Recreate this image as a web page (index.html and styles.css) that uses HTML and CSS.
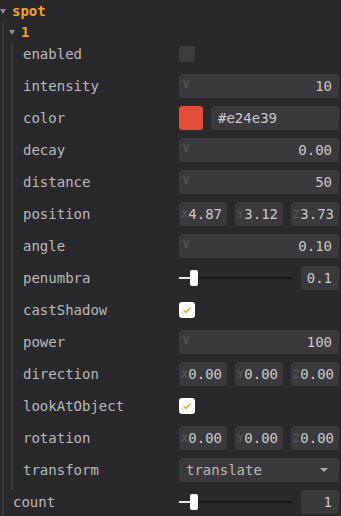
FILE: index.html
```html
<!DOCTYPE html>
<html lang="en">
<head>
    <meta charset="UTF-8">
    <meta name="viewport" content="width=device-width, initial-scale=1.0">
    <title>spot</title>
    <link rel="stylesheet" href="styles.css">
</head>
<body>
    <div class="panel">
        <div class="folder-title top">
            <span class="arrow"></span>
            <span class="folder-name">spot</span>
        </div>
        <div class="folder-body">
            <div class="folder-title sub">
                <span class="arrow"></span>
                <span class="folder-name">1</span>
            </div>
            <div class="sub-body">
                <div class="row">
                    <span class="label">enabled</span>
                    <div class="control"><span class="check"></span></div>
                </div>
                <div class="row">
                    <span class="label">intensity</span>
                    <div class="control"><div class="num"><span class="tag">V</span><span class="val">10</span></div></div>
                </div>
                <div class="row">
                    <span class="label">color</span>
                    <div class="control color-ctl">
                        <span class="swatch"></span>
                        <div class="text-input">#e24e39</div>
                    </div>
                </div>
                <div class="row">
                    <span class="label">decay</span>
                    <div class="control"><div class="num"><span class="tag">V</span><span class="val">0.00</span></div></div>
                </div>
                <div class="row">
                    <span class="label">distance</span>
                    <div class="control"><div class="num"><span class="tag">V</span><span class="val">50</span></div></div>
                </div>
                <div class="row">
                    <span class="label">position</span>
                    <div class="control vec">
                        <div class="num"><span class="tag">X</span><span class="val">4.87</span></div>
                        <div class="num"><span class="tag">Y</span><span class="val">3.12</span></div>
                        <div class="num"><span class="tag">Z</span><span class="val">3.73</span></div>
                    </div>
                </div>
                <div class="row">
                    <span class="label">angle</span>
                    <div class="control"><div class="num"><span class="tag">V</span><span class="val">0.10</span></div></div>
                </div>
                <div class="row">
                    <span class="label">penumbra</span>
                    <div class="control slider-ctl">
                        <div class="slider"><span class="fill" style="width: 10%"></span><span class="thumb"></span><span class="rest"></span></div>
                        <div class="num small"><span class="val">0.1</span></div>
                    </div>
                </div>
                <div class="row">
                    <span class="label">castShadow</span>
                    <div class="control"><span class="check on"><svg width="10" height="8" viewBox="0 0 10 8"><path d="M1.5 4.2 L4 6.5 L8.5 1.5" fill="none" stroke="#f0a030" stroke-width="1.4"/></svg></span></div>
                </div>
                <div class="row">
                    <span class="label">power</span>
                    <div class="control"><div class="num"><span class="tag">V</span><span class="val">100</span></div></div>
                </div>
                <div class="row">
                    <span class="label">direction</span>
                    <div class="control vec">
                        <div class="num"><span class="tag">X</span><span class="val">0.00</span></div>
                        <div class="num"><span class="tag">Y</span><span class="val">0.00</span></div>
                        <div class="num"><span class="tag">Z</span><span class="val">0.00</span></div>
                    </div>
                </div>
                <div class="row">
                    <span class="label">lookAtObject</span>
                    <div class="control"><span class="check on"><svg width="10" height="8" viewBox="0 0 10 8"><path d="M1.5 4.2 L4 6.5 L8.5 1.5" fill="none" stroke="#f0a030" stroke-width="1.4"/></svg></span></div>
                </div>
                <div class="row">
                    <span class="label">rotation</span>
                    <div class="control vec">
                        <div class="num"><span class="tag">X</span><span class="val">0.00</span></div>
                        <div class="num"><span class="tag">Y</span><span class="val">0.00</span></div>
                        <div class="num"><span class="tag">Z</span><span class="val">0.00</span></div>
                    </div>
                </div>
                <div class="row">
                    <span class="label">transform</span>
                    <div class="control">
                        <div class="select"><span>translate</span><span class="caret"></span></div>
                    </div>
                </div>
            </div>
            <div class="row count">
                <span class="label">count</span>
                <div class="control slider-ctl">
                    <div class="slider"><span class="fill" style="width: 10%"></span><span class="thumb"></span><span class="rest"></span></div>
                    <div class="num small"><span class="val">1</span></div>
                </div>
            </div>
        </div>
    </div>
</body>
</html>
```
FILE: styles.css
```css
body {
    margin: 0;
    background: #29292c;
    font-family: "DejaVu Sans Mono", monospace;
    font-size: 14px;
    color: #b8b8bc;
}
.panel {
    padding-right: 2px;
}
.folder-title {
    display: flex;
    align-items: center;
    color: #f0a030;
    font-weight: bold;
}
.folder-title.top {
    height: 22px;
}
.folder-title.sub {
    height: 20px;
    padding-left: 5px;
}
.arrow {
    width: 0;
    height: 0;
    border-left: 3.5px solid transparent;
    border-right: 3.5px solid transparent;
    border-top: 5px solid #8c8c92;
    margin-right: 6px;
}
.folder-body {
    margin-left: 2px;
    border-left: 2px solid #3b3b3e;
}
.sub-body {
    margin-left: 7px;
    border-left: 2px solid #3b3b3e;
    padding-left: 10px;
    padding-bottom: 8px;
    display: flex;
    flex-direction: column;
    gap: 8px;
}
.row {
    display: flex;
    align-items: center;
    height: 24px;
}
.row.count {
    padding-left: 9px;
}
.label {
    flex: 1;
}
.control {
    width: 160px;
    display: flex;
    align-items: center;
    height: 24px;
}
.check {
    width: 16px;
    height: 16px;
    border-radius: 3px;
    background: #3c3c3f;
    display: flex;
    align-items: center;
    justify-content: center;
}
.check.on {
    background: #ffffff;
}
.num {
    flex: 1;
    height: 24px;
    background: #3a3a3d;
    border-radius: 4px;
    display: flex;
    align-items: center;
    padding: 0 7px 0 4px;
    color: #c8c8cc;
}
.tag {
    font-size: 10px;
    color: #5c5c61;
    align-self: flex-start;
    margin-top: 5px;
}
.val {
    margin-left: auto;
}
.vec {
    gap: 8px;
}
.vec .num {
    padding: 0 5px 0 2px;
}
.vec .tag {
    font-size: 11px;
    align-self: center;
    margin-top: 0;
}
.color-ctl {
    gap: 8px;
}
.swatch {
    width: 24px;
    height: 24px;
    border-radius: 3px;
    background: #e24e39;
}
.text-input {
    flex: 1;
    height: 24px;
    background: #3a3a3d;
    border-radius: 4px;
    display: flex;
    align-items: center;
    padding-left: 7px;
    color: #c8c8cc;
}
.slider-ctl {
    gap: 9px;
}
.slider {
    width: 113px;
    display: flex;
    align-items: center;
    height: 24px;
}
.fill {
    height: 2px;
    background: #e8e8ea;
}
.thumb {
    width: 8px;
    height: 16px;
    border-radius: 2px;
    background: #ffffff;
}
.rest {
    flex: 1;
    height: 2px;
    background: #18181a;
}
.num.small {
    flex: 1;
}
.select {
    flex: 1;
    height: 24px;
    background: #3a3a3d;
    border-radius: 4px;
    display: flex;
    align-items: center;
    justify-content: space-between;
    padding: 0 11px 0 7px;
    color: #b8b8bc;
}
.caret {
    width: 0;
    height: 0;
    border-left: 4px solid transparent;
    border-right: 4px solid transparent;
    border-top: 4px solid #a8a8b0;
}
```
